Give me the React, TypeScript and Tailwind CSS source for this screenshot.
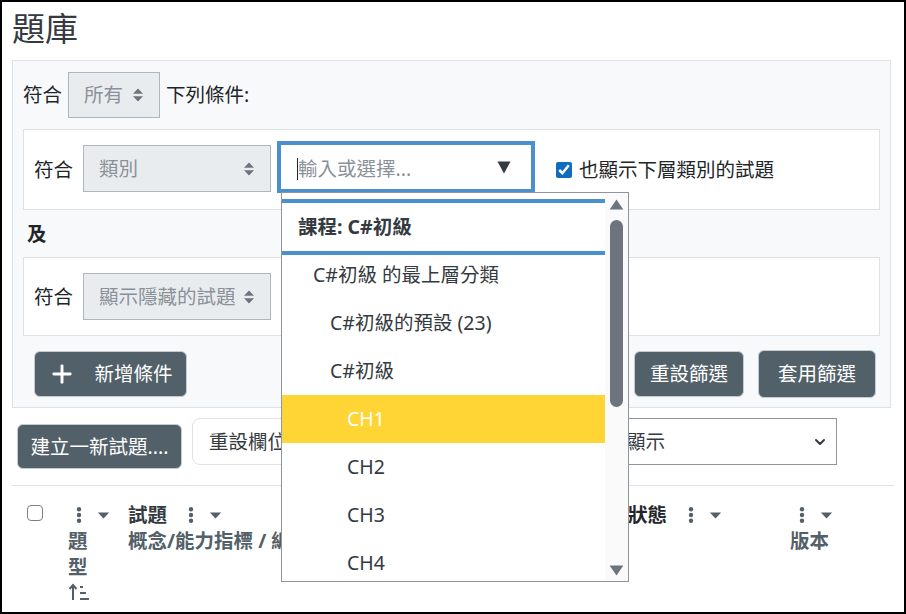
import { ChevronDown, Plus } from 'lucide-react';

function UpDown({ className }: { className?: string }) {
  return (
    <svg viewBox="0 0 12 16" className={className} fill="#6c757d">
      <path d="M1 6.8 6 1.5l5 5.3z" />
      <path d="M1 9.2 6 14.5l5-5.3z" />
    </svg>
  );
}

function ColumnMenu() {
  return (
    <span className="flex items-center gap-[12px]">
      <svg viewBox="0 0 6 16" className="h-[16px] w-[6px]" fill="#526069">
        <circle cx="3" cy="2.3" r="2.2" />
        <circle cx="3" cy="8" r="2.2" />
        <circle cx="3" cy="13.7" r="2.2" />
      </svg>
      <svg viewBox="0 0 14 8" className="ml-[3px] h-[7px] w-[13px]" fill="#526069">
        <path d="M0.5 0.5h13L7 7.5z" />
      </svg>
    </span>
  );
}

function SortIcon() {
  return (
    <svg viewBox="0 0 22 18" className="h-[18px] w-[22px]" fill="none" stroke="#526069" strokeWidth="2">
      <path d="M5 17V2M1.5 6 5 2l3.5 4" />
      <path d="M12 4h3M12 10h6M12 16h9" strokeWidth="2" />
    </svg>
  );
}

function DisabledSelect({ label, className }: { label: string; className: string }) {
  return (
    <div className={`flex items-center justify-between border border-[#adb5bd] bg-[#e9ecef] text-[#8a9198] ${className}`}>
      <span className="whitespace-nowrap">{label}</span>
      <UpDown className="h-[16px] w-[12px] shrink-0" />
    </div>
  );
}

function DarkButton({ children, className }: { children: React.ReactNode; className: string }) {
  return (
    <button className={`flex items-center justify-center rounded-md border border-[#c3ccd1] bg-[#526069] text-white ${className}`}>
      {children}
    </button>
  );
}

const treeItems = [
  { label: 'C#初級 的最上層分類', pad: 'pl-[31px]' },
  { label: 'C#初級的預設 (23)', pad: 'pl-[48px]' },
  { label: 'C#初級', pad: 'pl-[48px]' },
  { label: 'CH1', pad: 'pl-[65px] bg-[#ffd535] text-white' },
  { label: 'CH2', pad: 'pl-[65px]' },
  { label: 'CH3', pad: 'pl-[65px]' },
  { label: 'CH4', pad: 'pl-[65px]' },
];

function Dropdown() {
  return (
    <div className="absolute left-[4px] top-[51px] z-10 flex h-[390px] w-[348px] overflow-hidden border border-[#8f959e] bg-white text-[#343a40]">
      <div className="w-[323px] pt-[6px]">
        <div className="relative z-10 -mb-[4px] flex h-[56px] items-center border-y-[4px] border-[#4a90d0] pl-[16px] font-bold">課程: C#初級</div>
        {treeItems.map((item) => (
          <div key={item.label} className={`flex h-[48px] shrink-0 items-center ${item.pad}`}>
            {item.label}
          </div>
        ))}
      </div>
      <div className="flex w-[23px] flex-col items-center bg-[#fafafa] pt-[6px]">
        <svg viewBox="0 0 16 12" className="h-[11px] w-[15px]" fill="#6c757d">
          <path d="M8 0.5 15.5 11.5H0.5z" />
        </svg>
        <div className="mt-[10px] h-[187px] w-[13px] shrink-0 rounded-[7px] bg-[#6c757d]" />
        <svg viewBox="0 0 16 12" className="mt-[158px] h-[11px] w-[15px]" fill="#6c757d">
          <path d="M0.5 0.5h15L8 11.5z" />
        </svg>
      </div>
    </div>
  );
}

export default function App() {
  return (
    <div className="h-[614px] w-[906px] overflow-hidden border-2 border-black bg-white px-[10px] font-['Noto_Sans','Noto_Sans_CJK_TC',sans-serif] text-[19.5px] leading-[24px] text-[#212529]">
      <h1 className="h-[58px] pt-[4px] text-[33px] leading-[46px] text-[#343a40]">題庫</h1>

      {/* Filter panel */}
      <section className="h-[348px] w-[879px] border border-[#dee2e6] bg-[#f8f9fa] px-[10px] pt-[11px]">
        <div className="flex h-[46px] items-center">
          <span>符合</span>
          <DisabledSelect label="所有" className="ml-[6px] h-[46px] w-[92px] pl-[15px] pr-[15px]" />
          <span className="ml-[6px]">下列條件:</span>
        </div>

        <div className="mt-[11px] flex h-[81px] items-center border border-[#dee2e6] bg-white pl-[10px]">
          <span>符合</span>
          <DisabledSelect label="類別" className="mb-[2px] ml-[10px] h-[47px] w-[188px] pl-[15px] pr-[15px]" />
          <div className="relative mb-[5px] ml-[6px] h-[52px] w-[258px]">
            <div className="flex h-full items-center justify-between border-[4px] border-[#4a90d0] pl-[16px] pr-[20px] text-[#8a9198]">
              <span className="flex items-center pt-[3px]">
                <span className="h-[22px] w-px bg-[#212529]" />
                輸入或選擇...
              </span>
              <svg viewBox="0 0 14 13" className="h-[13px] w-[14px]" fill="#343a40">
                <path d="M0.5 0.5h13L7 12.5z" />
              </svg>
            </div>
            <Dropdown />
          </div>
          <label className="ml-[21px] flex items-center gap-[7px] text-[#212529]">
            <input type="checkbox" defaultChecked className="h-[16px] w-[16px] accent-[#0f6cbf]" />
            也顯示下層類別的試題
          </label>
        </div>

        <div className="flex h-[47px] items-center pl-[4px] font-bold">及</div>

        <div className="flex h-[79px] items-center border border-[#dee2e6] bg-white pl-[10px]">
          <span>符合</span>
          <DisabledSelect label="顯示隱藏的試題" className="ml-[10px] h-[47px] w-[188px] pl-[15px] pr-[15px]" />
        </div>

        <div className="mt-[14px] flex items-center pl-[11px] pr-[4px]">
          <DarkButton className="h-[46px] w-[153px] gap-[18px]">
            <Plus className="h-[28px] w-[28px]" strokeWidth={2.5} />
            新增條件
          </DarkButton>
          <DarkButton className="ml-auto h-[46px] w-[110px]">重設篩選</DarkButton>
          <DarkButton className="ml-[14px] h-[48px] w-[118px]">套用篩選</DarkButton>
        </div>
      </section>

      {/* Toolbar */}
      <div className="mt-[10px] flex h-[47px] items-start pl-[5px]">
        <DarkButton className="mt-[6px] h-[45px] w-[165px]">建立一新試題....</DarkButton>
        <button className="ml-[10px] h-[47px] w-[150px] rounded-lg border border-[#dee2e6] bg-white pl-[16px] text-left text-[#343a40]">
          重設欄位
        </button>
        <div className="ml-auto mr-[57px] flex h-[47px] w-[300px] items-center justify-between border border-[#8f959e] bg-white pl-[49px] pr-[8px] text-[#343a40]">
          <span>每頁顯示</span>
          <ChevronDown className="h-[16px] w-[16px] text-[#343a40]" strokeWidth={3} />
        </div>
      </div>

      <div className="mt-[20px] border-t border-[#dee2e6]" />

      {/* Table head */}
      <div className="grid grid-cols-[41px_60px_500px_162px_100px] pl-[15px] pt-[17px] font-bold leading-[26px] text-[#526069]">
        <div className="pt-[2px]">
          <span className="block h-[16px] w-[16px] rounded-[4px] border border-[#7b8086] bg-white" />
        </div>
        <div className="w-[40px]">
          <div className="flex h-[24px] items-center pl-[8px]"><ColumnMenu /></div>
          <div className="mt-[1px]">題<br />型</div>
          <div className="mt-[3px]"><SortIcon /></div>
        </div>
        <div className="whitespace-nowrap">
          <div className="flex h-[24px] items-center gap-[21px]">
            <span className="text-[#343a40]">試題</span>
            <ColumnMenu />
          </div>
          <div className="mt-[1px]">概念/能力指標 / 編號</div>
        </div>
        <div className="flex h-[24px] items-center gap-[21px] text-[#212529]">
          <span>狀態</span>
          <ColumnMenu />
        </div>
        <div>
          <div className="flex h-[24px] items-center pl-[9px]"><ColumnMenu /></div>
          <div className="mt-[1px]">版本</div>
        </div>
      </div>
    </div>
  );
}
